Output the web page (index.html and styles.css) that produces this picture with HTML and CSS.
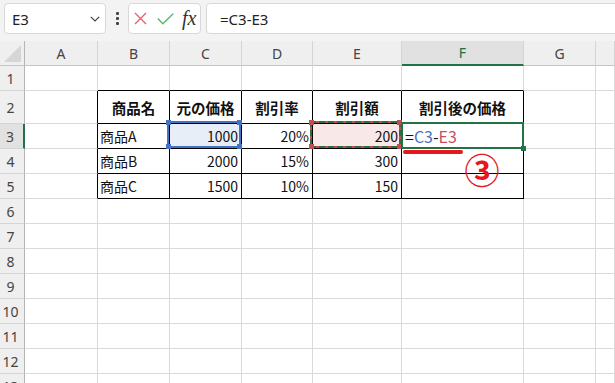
FILE: index.html
```html
<!DOCTYPE html>
<html lang="ja">
<head>
<meta charset="utf-8">
<link rel="stylesheet" href="styles.css">
</head>
<body>
<div class="app">
  <div class="toolbar">
    <div class="namebox">
      <span class="nb-text">E3</span>
      <svg class="chev" width="10" height="6" viewBox="0 0 10 6"><path d="M0.8 0.8 L5 5 L9.2 0.8" fill="none" stroke="#444" stroke-width="1.2"/></svg>
    </div>
    <div class="dots"><i></i><i></i><i></i></div>
    <div class="fxbox">
      <svg class="ico-x" width="13" height="13" viewBox="0 0 13 13"><path d="M1 1 L12 12 M12 1 L1 12" stroke="#e5636a" stroke-width="1.4" fill="none"/></svg>
      <svg class="ico-ok" width="17" height="12" viewBox="0 0 17 12"><path d="M0.8 5.6 L5.8 10.8 L16.2 0.8" stroke="#5cb76a" stroke-width="1.4" fill="none"/></svg>
      <span class="fx">fx</span>
    </div>
    <div class="formula">=C3-E3</div>
  </div>
  <div class="sheet">
    <!-- header row -->
    <div class="cell corner"><span class="tri"></span></div>
    <div class="cell ch">A</div>
    <div class="cell ch">B</div>
    <div class="cell ch">C</div>
    <div class="cell ch">D</div>
    <div class="cell ch">E</div>
    <div class="cell ch ch-sel">F</div>
    <div class="cell ch">G</div>
    <div class="cell ch"></div>
    <!-- row 1 -->
    <div class="cell rh">1</div>
    <div class="cell"></div>
    <div class="cell tt"></div>
    <div class="cell tt"></div>
    <div class="cell tt"></div>
    <div class="cell tt"></div>
    <div class="cell tt"></div>
    <div class="cell"></div>
    <div class="cell"></div>
    <!-- row 2 -->
    <div class="cell rh">2</div>
    <div class="cell tl"></div>
    <div class="cell t hd">商品名</div>
    <div class="cell t hd">元の価格</div>
    <div class="cell t hd">割引率</div>
    <div class="cell t hd">割引額</div>
    <div class="cell t hd">割引後の価格</div>
    <div class="cell"></div>
    <div class="cell"></div>
    <!-- row 3 -->
    <div class="cell rh rh-sel">3</div>
    <div class="cell tl"></div>
    <div class="cell t l">商品A</div>
    <div class="cell t r ref-c">1000
      <span class="box-blue"></span>
      <span class="h h-tl hb"></span><span class="h h-tr hb"></span><span class="h h-bl hb"></span><span class="h h-br hb"></span>
    </div>
    <div class="cell t r">20%</div>
    <div class="cell t r ref-e">200
      <span class="box-red"></span>
      <span class="h h-tl hr"></span><span class="h h-tr hr"></span><span class="h h-bl hr"></span><span class="h h-br hr"></span>
    </div>
    <div class="cell t l active">
      <span class="ftext">=<span class="c-blue">C3</span>-<span class="c-red">E3</span></span>
      <span class="box-green"></span>
      <span class="fill-h"></span>
      <span class="mark-line"></span>
      <span class="mark-num">③</span>
    </div>
    <div class="cell"></div>
    <div class="cell"></div>
    <!-- row 4 -->
    <div class="cell rh">4</div>
    <div class="cell tl"></div>
    <div class="cell t l">商品B</div>
    <div class="cell t r">2000</div>
    <div class="cell t r">15%</div>
    <div class="cell t r">300</div>
    <div class="cell t"></div>
    <div class="cell"></div>
    <div class="cell"></div>
    <!-- row 5 -->
    <div class="cell rh">5</div>
    <div class="cell tl"></div>
    <div class="cell t l">商品C</div>
    <div class="cell t r">1500</div>
    <div class="cell t r">10%</div>
    <div class="cell t r">150</div>
    <div class="cell t"></div>
    <div class="cell"></div>
    <div class="cell"></div>
    <!-- rows 6-13 -->
    <div class="cell rh">6</div><div class="cell"></div><div class="cell"></div><div class="cell"></div><div class="cell"></div><div class="cell"></div><div class="cell"></div><div class="cell"></div><div class="cell"></div>
    <div class="cell rh">7</div><div class="cell"></div><div class="cell"></div><div class="cell"></div><div class="cell"></div><div class="cell"></div><div class="cell"></div><div class="cell"></div><div class="cell"></div>
    <div class="cell rh">8</div><div class="cell"></div><div class="cell"></div><div class="cell"></div><div class="cell"></div><div class="cell"></div><div class="cell"></div><div class="cell"></div><div class="cell"></div>
    <div class="cell rh">9</div><div class="cell"></div><div class="cell"></div><div class="cell"></div><div class="cell"></div><div class="cell"></div><div class="cell"></div><div class="cell"></div><div class="cell"></div>
    <div class="cell rh">10</div><div class="cell"></div><div class="cell"></div><div class="cell"></div><div class="cell"></div><div class="cell"></div><div class="cell"></div><div class="cell"></div><div class="cell"></div>
    <div class="cell rh">11</div><div class="cell"></div><div class="cell"></div><div class="cell"></div><div class="cell"></div><div class="cell"></div><div class="cell"></div><div class="cell"></div><div class="cell"></div>
    <div class="cell rh">12</div><div class="cell"></div><div class="cell"></div><div class="cell"></div><div class="cell"></div><div class="cell"></div><div class="cell"></div><div class="cell"></div><div class="cell"></div>
    <div class="cell rh">13</div><div class="cell"></div><div class="cell"></div><div class="cell"></div><div class="cell"></div><div class="cell"></div><div class="cell"></div><div class="cell"></div><div class="cell"></div>
  </div>
</div>
</body>
</html>
```

FILE: styles.css
```css
* { box-sizing: border-box; }
html, body { margin: 0; padding: 0; background: #fff; }
body { width: 615px; height: 383px; overflow: hidden; font-family: "Noto Sans CJK JP", "Noto Sans", sans-serif; }

.app { display: flex; flex-direction: column; }

.toolbar {
  height: 41px;
  background: #f3f3f3;
  display: flex;
  align-items: flex-start;
  padding: 3px 0 0 4px;
  overflow: hidden;
}
.namebox {
  width: 102px; height: 31px;
  background: #fff;
  border: 1px solid #d8d8d8;
  border-radius: 4px;
  display: flex; align-items: center; justify-content: space-between;
  padding: 0 5px 0 7px;
}
.nb-text { font-family: "Noto Sans", sans-serif; font-size: 15px; color: #222; }
.chev { margin-top: 1px; }
.dots {
  width: 22px; height: 31px;
  display: flex; flex-direction: column; align-items: center; justify-content: center; gap: 2px;
}
.dots i { display: block; width: 3px; height: 3px; background: #444; border-radius: 1px; }
.fxbox {
  width: 73px; height: 31px;
  background: #fff;
  border: 1px solid #d8d8d8;
  border-radius: 4px;
  display: flex; align-items: center;
  padding: 0 0 0 5px;
}
.ico-x { margin-right: 10px; }
.ico-ok { margin-right: 8px; }
.fx { font-family: "Liberation Serif", serif; font-style: italic; font-size: 20px; color: #333; line-height: 1; margin-top: -2px; }
.formula {
  flex: 1;
  margin-left: 5px; margin-right: -10px;
  height: 31px;
  background: #fff;
  border: 1px solid #d8d8d8;
  border-radius: 4px;
  font-family: "Noto Sans", sans-serif;
  font-size: 15px; color: #222;
  display: flex; align-items: center;
  padding-left: 13px;
}

.sheet {
  display: grid;
  grid-template-columns: 25px 73px 72px 72px 71px 89px 122px 72px 1fr;
  grid-template-rows: 25px 25px 33px repeat(11, 25px);
  font-size: 14px;
  color: #111;
}
.cell {
  border-right: 1px solid #dadada;
  border-bottom: 1px solid #dadada;
  display: flex; align-items: center;
  white-space: nowrap;
  min-width: 0;
}
.corner { background: #efefef; border-right-color: #b5b5b5; border-bottom-color: #c4c4c4; position: relative; }
.tri {
  position: absolute; left: 4px; top: 4px; width: 17px; height: 17px;
  background: #d6d6d6;
  clip-path: polygon(100% 0, 100% 100%, 0 100%);
}
.ch {
  background: #efefef;
  border-right-color: #d4d4d4;
  border-bottom-color: #c4c4c4;
  justify-content: center;
  font-family: "Noto Sans", sans-serif;
  font-size: 14px; color: #444;
}
.ch-sel { background: #e1e1e1; color: #1e6e42; border-bottom: 2px solid #217346; }
.rh {
  background: #efefef;
  border-right-color: #b5b5b5;
  border-bottom-color: #d4d4d4;
  justify-content: center;
  font-family: "Noto Sans", sans-serif;
  font-size: 14px; color: #444;
  padding-right: 3px;
}
.rh-sel { background: #e1e1e1; border-right: 2px solid #217346; }

.tt { border-bottom-color: #000; }
.tl { border-right-color: #000; }
.t { border-right-color: #000; border-bottom-color: #000; }
.hd { justify-content: center; font-weight: bold; font-size: 14.5px; }
.l { padding-left: 2px; }
.r { justify-content: flex-end; padding-right: 3px; }

.ref-c { position: relative; background: #e8eef8; }
.ref-e { position: relative; background: #f9e8e8; }
.active { position: relative; padding-left: 3px; }

.box-blue {
  position: absolute; top: -3px; left: -3px; right: 0; bottom: 0;
  border: 2px solid #4472c4; z-index: 2;
}
.box-red {
  position: absolute; top: -3px; left: -3px; right: 0; bottom: 0;
  border: 2px solid #c0504d; z-index: 2;
}
.box-red::after {
  content: ""; position: absolute; top: -2px; left: -2px; right: -2px; bottom: -2px;
  background:
    repeating-linear-gradient(90deg, #2b6e45 0 6px, transparent 6px 9px) top left / 100% 2px no-repeat,
    repeating-linear-gradient(90deg, #2b6e45 0 6px, transparent 6px 9px) bottom left / 100% 2px no-repeat,
    repeating-linear-gradient(180deg, #2b6e45 0 6px, transparent 6px 9px) top left / 2px 100% no-repeat,
    repeating-linear-gradient(180deg, #2b6e45 0 6px, transparent 6px 9px) top right / 2px 100% no-repeat;
}
.h { position: absolute; width: 5px; height: 5px; z-index: 3; }
.h-tl { left: -4px; top: -4px; }
.h-tr { right: -1px; top: -4px; }
.h-bl { left: -4px; bottom: -1px; }
.h-br { right: -1px; bottom: -1px; }
.hb { background: #4472c4; }
.hr { background: #c0504d; }

.box-green {
  position: absolute; top: -2px; left: -1px; right: -1px; bottom: -1px;
  border: 2px solid #217346; z-index: 4;
}
.fill-h {
  position: absolute; right: -3px; bottom: -3px; width: 5px; height: 5px;
  background: #217346; z-index: 5;
}
.ftext { position: relative; z-index: 1; font-size: 16px; }
.c-blue { color: #4472c4; }
.c-red { color: #c8505e; }
.mark-line {
  position: absolute; left: 1px; top: 26px; width: 60px; height: 4px;
  background: #e5171f; border-radius: 2px; z-index: 6;
}
.mark-num {
  position: absolute; left: 62px; top: 26px; width: 36px; height: 36px;
  display: flex; align-items: center; justify-content: center;
  font-size: 35px; font-weight: bold; line-height: 1; color: #e5171f; z-index: 6;
}
```
